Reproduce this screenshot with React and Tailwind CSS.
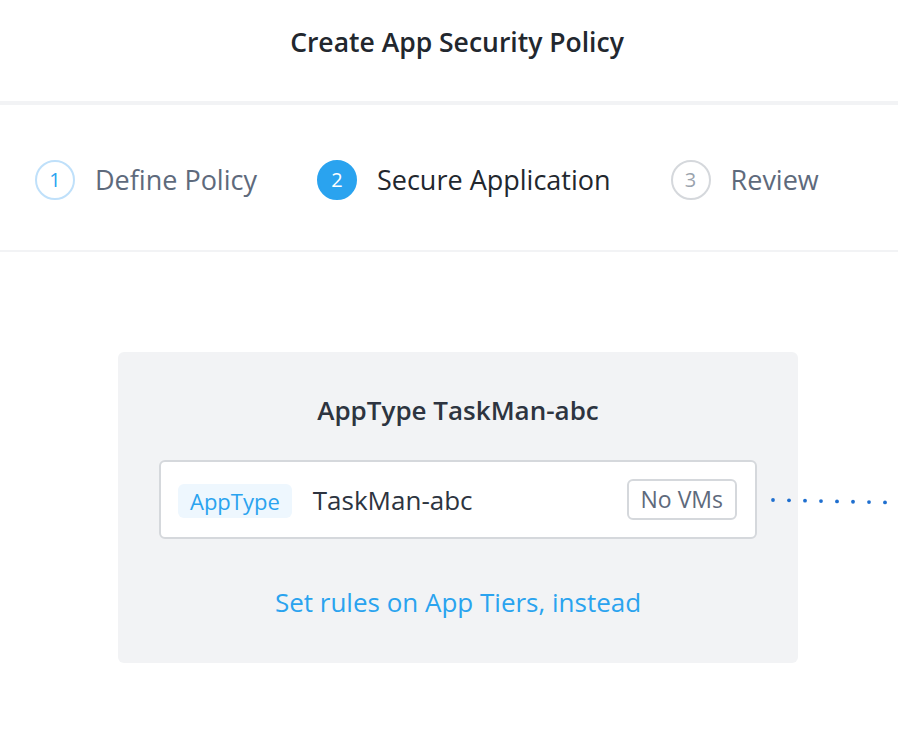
import React from "react";

const font = { fontFamily: "'Open Sans', Lato, sans-serif" };

function Step({ n, label, state }) {
  const circle =
    state === "active"
      ? "bg-[#2aa3ef] border-[#2aa3ef] text-white"
      : state === "done"
      ? "bg-white border-[#bfe0fa] text-[#2aa3ef]"
      : "bg-white border-[#d5d8dc] text-[#9aa3ad]";
  const text = state === "active" ? "text-[#22272e]" : "text-[#5e6a7c]";
  return (
    <div className="flex items-center gap-[20px]">
      <div className={`w-10 h-10 rounded-full border-2 flex items-center justify-center text-[20px] ${circle}`}>
        {n}
      </div>
      <span className={`text-[27px] leading-[36px] ${text}`}>{label}</span>
    </div>
  );
}

export default function App() {
  return (
    <div className="w-[898px] h-[736px] bg-white overflow-hidden" style={font}>
      <div className="h-[105px] border-b-4 border-[#f2f3f5] flex items-start justify-center pt-[24px] pl-[16px]">
        <h1 className="text-[26.5px] leading-[36px] font-semibold text-[#22272e]">Create App Security Policy</h1>
      </div>

      <div className="h-[147px] border-b-2 border-[#f2f3f5] flex items-center pt-[4px] pl-[35px] gap-[60px]">
        <Step n="1" label="Define Policy" state="done" />
        <Step n="2" label="Secure Application" state="active" />
        <Step n="3" label="Review" state="todo" />
      </div>

      <div className="mt-[100px] ml-[118px] w-[680px] h-[311px] bg-[#f2f3f5] rounded-md flex flex-col items-center pt-[40px]">
        <h2 className="text-[26px] leading-[36px] font-semibold text-[#2d3440]">AppType TaskMan-abc</h2>

        <div className="relative mt-[32px] w-[598px] h-[79px] bg-white border-2 border-[#d5d8dc] rounded-md flex items-center pl-[17px] pr-[18px]">
          <span className="h-[34px] px-[12px] mt-[3px] rounded-md bg-[#eef7fe] text-[#2aa3ef] text-[22px] leading-[34px]">
            AppType
          </span>
          <span className="ml-[21px] text-[26px] leading-[36px] text-[#2d3440]">TaskMan-abc</span>
          <span className="ml-auto h-[41px] px-[12px] border-2 border-[#d5d8dc] rounded-md flex items-center text-[23px] text-[#5e6a7c]">
            No VMs
          </span>
          <svg className="absolute left-[609px] top-[35px]" width="140" height="10" viewBox="0 0 140 10">
            {[0, 1, 2, 3, 4, 5, 6, 7, 8].map((i) => (
              <circle key={i} cx={3 + i * 16} cy={3 + i * 0.35} r="1.9" fill="#1f6fcf" />
            ))}
          </svg>
        </div>

        <a className="mt-[45px] text-[26px] leading-[36px] text-[#2aa3ef]">Set rules on App Tiers, instead</a>
      </div>
    </div>
  );
}
